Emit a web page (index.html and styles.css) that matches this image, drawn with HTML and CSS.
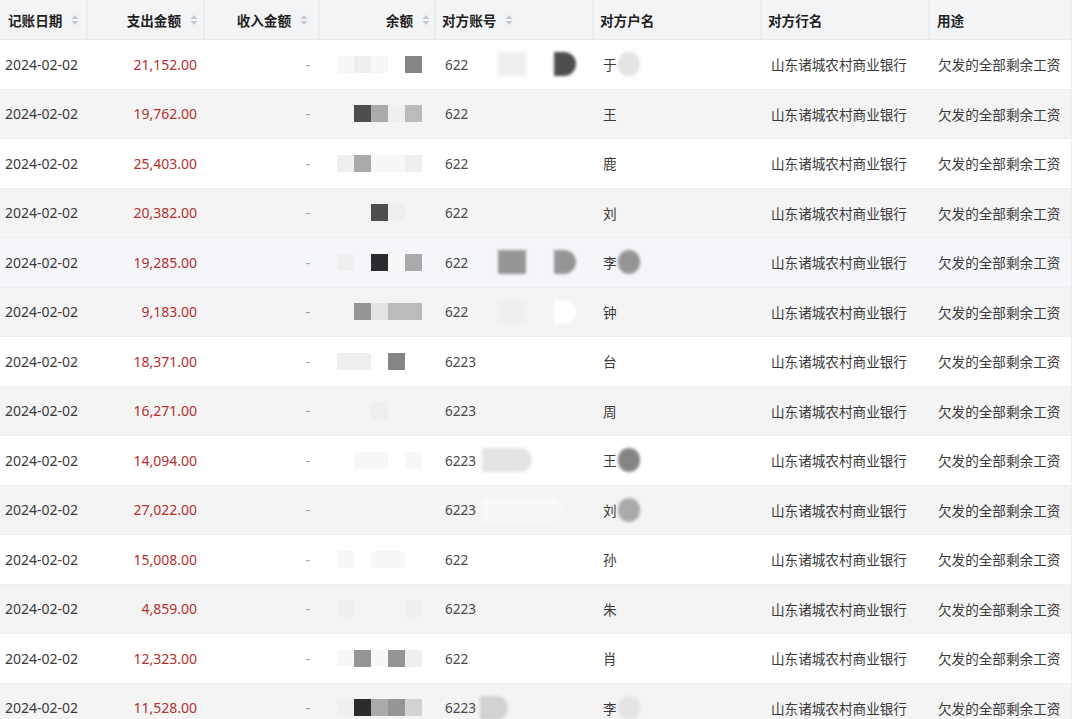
FILE: index.html
```html
<!DOCTYPE html>
<html lang="zh">
<head>
<meta charset="utf-8">
<link rel="stylesheet" href="styles.css">
</head>
<body>
<div class="table">
  <div class="row head">
    <div class="c c1"><span>记账日期</span><svg class="sort" viewBox="0 0 8 12"><path d="M4 1 L7.5 5 H0.5 Z M4 11 L7.5 7 H0.5 Z"/></svg></div>
    <div class="c c2 r"><span>支出金额</span><svg class="sort" viewBox="0 0 8 12"><path d="M4 1 L7.5 5 H0.5 Z M4 11 L7.5 7 H0.5 Z"/></svg></div>
    <div class="c c3 r"><span>收入金额</span><svg class="sort" viewBox="0 0 8 12"><path d="M4 1 L7.5 5 H0.5 Z M4 11 L7.5 7 H0.5 Z"/></svg></div>
    <div class="c c4 r"><span>余额</span><svg class="sort" viewBox="0 0 8 12"><path d="M4 1 L7.5 5 H0.5 Z M4 11 L7.5 7 H0.5 Z"/></svg></div>
    <div class="c c5"><span>对方账号</span><svg class="sort" viewBox="0 0 8 12"><path d="M4 1 L7.5 5 H0.5 Z M4 11 L7.5 7 H0.5 Z"/></svg></div>
    <div class="c c6"><span>对方户名</span></div>
    <div class="c c7"><span>对方行名</span></div>
    <div class="c c8"><span>用途</span></div>
  </div>

  <div class="row">
    <div class="c c1">2024-02-02</div>
    <div class="c c2 r red">21,152.00</div>
    <div class="c c3 r dash">-</div>
    <div class="c c4 m"><i class="k0"></i><i class="k1"></i><i class="k0"></i><i class="kt"></i><i class="k7"></i></div>
    <div class="c c5 acct">622<b class="blob w28 k1 ml30"></b><b class="blob w22 k8 rd ml28"></b></div>
    <div class="c c6 nm">于<b class="blob w22 k2 rd"></b></div>
    <div class="c c7">山东诸城农村商业银行</div>
    <div class="c c8">欠发的全部剩余工资</div>
  </div>

  <div class="row alt">
    <div class="c c1">2024-02-02</div>
    <div class="c c2 r red">19,762.00</div>
    <div class="c c3 r dash">-</div>
    <div class="c c4 m"><i class="kt"></i><i class="k8"></i><i class="k5"></i><i class="k1"></i><i class="k4"></i></div>
    <div class="c c5 acct">622</div>
    <div class="c c6 nm">王</div>
    <div class="c c7">山东诸城农村商业银行</div>
    <div class="c c8">欠发的全部剩余工资</div>
  </div>

  <div class="row">
    <div class="c c1">2024-02-02</div>
    <div class="c c2 r red">25,403.00</div>
    <div class="c c3 r dash">-</div>
    <div class="c c4 m"><i class="k1"></i><i class="k5"></i><i class="k0"></i><i class="k0"></i><i class="k1"></i></div>
    <div class="c c5 acct">622</div>
    <div class="c c6 nm">鹿</div>
    <div class="c c7">山东诸城农村商业银行</div>
    <div class="c c8">欠发的全部剩余工资</div>
  </div>

  <div class="row alt">
    <div class="c c1">2024-02-02</div>
    <div class="c c2 r red">20,382.00</div>
    <div class="c c3 r dash">-</div>
    <div class="c c4 m"><i class="kt"></i><i class="kt"></i><i class="k8"></i><i class="k1"></i><i class="kt"></i></div>
    <div class="c c5 acct">622</div>
    <div class="c c6 nm">刘</div>
    <div class="c c7">山东诸城农村商业银行</div>
    <div class="c c8">欠发的全部剩余工资</div>
  </div>

  <div class="row hover">
    <div class="c c1">2024-02-02</div>
    <div class="c c2 r red">19,285.00</div>
    <div class="c c3 r dash">-</div>
    <div class="c c4 m"><i class="k1"></i><i class="kt"></i><i class="k9"></i><i class="k0"></i><i class="k5"></i></div>
    <div class="c c5 acct">622<b class="blob w28 k6 ml30"></b><b class="blob w22 k6 rd ml28"></b></div>
    <div class="c c6 nm">李<b class="blob w22 k6 rd"></b></div>
    <div class="c c7">山东诸城农村商业银行</div>
    <div class="c c8">欠发的全部剩余工资</div>
  </div>

  <div class="row alt">
    <div class="c c1">2024-02-02</div>
    <div class="c c2 r red">9,183.00</div>
    <div class="c c3 r dash">-</div>
    <div class="c c4 m"><i class="kt"></i><i class="k6"></i><i class="k2"></i><i class="k4"></i><i class="k4"></i></div>
    <div class="c c5 acct">622<b class="blob w28 k1 ml30"></b><b class="blob w22 kw rd ml28"></b></div>
    <div class="c c6 nm">钟</div>
    <div class="c c7">山东诸城农村商业银行</div>
    <div class="c c8">欠发的全部剩余工资</div>
  </div>

  <div class="row">
    <div class="c c1">2024-02-02</div>
    <div class="c c2 r red">18,371.00</div>
    <div class="c c3 r dash">-</div>
    <div class="c c4 m"><i class="k1"></i><i class="k1"></i><i class="kt"></i><i class="k7"></i><i class="kt"></i></div>
    <div class="c c5 acct">6223</div>
    <div class="c c6 nm">台</div>
    <div class="c c7">山东诸城农村商业银行</div>
    <div class="c c8">欠发的全部剩余工资</div>
  </div>

  <div class="row alt">
    <div class="c c1">2024-02-02</div>
    <div class="c c2 r red">16,271.00</div>
    <div class="c c3 r dash">-</div>
    <div class="c c4 m"><i class="kt"></i><i class="kt"></i><i class="k1"></i><i class="kt"></i><i class="kt"></i></div>
    <div class="c c5 acct">6223</div>
    <div class="c c6 nm">周</div>
    <div class="c c7">山东诸城农村商业银行</div>
    <div class="c c8">欠发的全部剩余工资</div>
  </div>

  <div class="row">
    <div class="c c1">2024-02-02</div>
    <div class="c c2 r red">14,094.00</div>
    <div class="c c3 r dash">-</div>
    <div class="c c4 m"><i class="kt"></i><i class="k0"></i><i class="k0"></i><i class="kt"></i><i class="k0"></i></div>
    <div class="c c5 acct">6223<b class="blob w50 k2 ml6 rd"></b></div>
    <div class="c c6 nm">王<b class="blob w22 k7 rd"></b></div>
    <div class="c c7">山东诸城农村商业银行</div>
    <div class="c c8">欠发的全部剩余工资</div>
  </div>

  <div class="row alt">
    <div class="c c1">2024-02-02</div>
    <div class="c c2 r red">27,022.00</div>
    <div class="c c3 r dash">-</div>
    <div class="c c4 m"><i class="kt"></i><i class="kt"></i><i class="kt"></i><i class="kt"></i><i class="kt"></i></div>
    <div class="c c5 acct">6223<b class="blob w80 k0 ml6 rd"></b></div>
    <div class="c c6 nm">刘<b class="blob w22 k5 rd"></b></div>
    <div class="c c7">山东诸城农村商业银行</div>
    <div class="c c8">欠发的全部剩余工资</div>
  </div>

  <div class="row">
    <div class="c c1">2024-02-02</div>
    <div class="c c2 r red">15,008.00</div>
    <div class="c c3 r dash">-</div>
    <div class="c c4 m"><i class="k0"></i><i class="kt"></i><i class="k0"></i><i class="k0"></i><i class="kt"></i></div>
    <div class="c c5 acct">622</div>
    <div class="c c6 nm">孙</div>
    <div class="c c7">山东诸城农村商业银行</div>
    <div class="c c8">欠发的全部剩余工资</div>
  </div>

  <div class="row alt">
    <div class="c c1">2024-02-02</div>
    <div class="c c2 r red">4,859.00</div>
    <div class="c c3 r dash">-</div>
    <div class="c c4 m"><i class="k1"></i><i class="kt"></i><i class="kt"></i><i class="kt"></i><i class="k1"></i></div>
    <div class="c c5 acct">6223</div>
    <div class="c c6 nm">朱</div>
    <div class="c c7">山东诸城农村商业银行</div>
    <div class="c c8">欠发的全部剩余工资</div>
  </div>

  <div class="row">
    <div class="c c1">2024-02-02</div>
    <div class="c c2 r red">12,323.00</div>
    <div class="c c3 r dash">-</div>
    <div class="c c4 m"><i class="k0"></i><i class="k6"></i><i class="k0"></i><i class="k6"></i><i class="k1"></i></div>
    <div class="c c5 acct">622</div>
    <div class="c c6 nm">肖</div>
    <div class="c c7">山东诸城农村商业银行</div>
    <div class="c c8">欠发的全部剩余工资</div>
  </div>

  <div class="row alt">
    <div class="c c1">2024-02-02</div>
    <div class="c c2 r red">11,528.00</div>
    <div class="c c3 r dash">-</div>
    <div class="c c4 m"><i class="k1"></i><i class="k9"></i><i class="k5"></i><i class="k6"></i><i class="k3"></i></div>
    <div class="c c5 acct">6223<b class="blob w28 k3 ml4 rd"></b></div>
    <div class="c c6 nm">李<b class="blob w22 k2 rd"></b></div>
    <div class="c c7">山东诸城农村商业银行</div>
    <div class="c c8">欠发的全部剩余工资</div>
  </div>
</div>
</body>
</html>
```

FILE: styles.css
```css
* { box-sizing: border-box; }
html, body { margin: 0; padding: 0; background: #ffffff; }
body {
  font-family: "Noto Sans", "Noto Sans CJK SC", sans-serif;
  font-size: 14px;
  color: #3a3a3a;
  overflow: hidden;
  height: 719px;
}
.table {
  width: 1072px;
  border-right: 1px solid #eeeeee;
}
.row {
  display: grid;
  grid-template-columns: 88px 117px 115px 116px 158px 168px 168px 141px;
  height: 49.5px;
  background: #ffffff;
  border-bottom: 1px solid #efefef;
}
.row.alt { background: #f4f4f4; }
.row.hover { background: #f5f6fa; }
.row.head {
  height: 40px;
  background: #f3f4f6;
  font-weight: 700;
  color: #1f1f1f;
  border-bottom: 1px solid #e9eaec;
}
.head .c { border-right: 2px solid #eaebed; }
.head .c8 { border-right: none; }
.c {
  display: flex;
  align-items: center;
  white-space: nowrap;
  overflow: hidden;
  font-size: 13.6px;
}
.c1 { padding-left: 5px; }
.head .c1 { padding-left: 8px; }
.r { justify-content: flex-end; padding-right: 8px; }
.head .c2 { padding-right: 5px; }
.head .c3 { padding-right: 10px; }
.head .c4 { padding-right: 4px; }
.c5 { padding-left: 9px; }
.head .c5 { padding-left: 6px; }
.c6 { padding-left: 9px; }
.head .c6 { padding-left: 6px; }
.c7 { padding-left: 9px; }
.head .c7 { padding-left: 6px; }
.c8 { padding-left: 8px; }
.head .c8 { padding-left: 7px; }
.sort { width: 8px; height: 12px; margin-left: 9px; fill: #c3c7cf; flex: none; }
.red { color: #b3302f; font-size: 14px; }
.c1 { font-size: 14px; }
.head .c1 { font-size: 13.6px; }
.dash { color: #7fa8a4; padding-right: 10px; }
.m { padding-left: 17px; }
.m i { display: block; width: 17px; height: 17px; }
.acct { color: #4a4a4a; }
.blob { display: block; height: 24px; filter: blur(1.5px); flex: none; }
.rd { border-radius: 0 12px 12px 0; }
.w22 { width: 22px; }
.w28 { width: 28px; }
.w50 { width: 50px; }
.w80 { width: 80px; }
.ml30 { margin-left: 30px; }
.ml28 { margin-left: 28px; }
.ml6 { margin-left: 6px; }
.ml4 { margin-left: 4px; }
.nm .blob { margin-left: 1px; border-radius: 12px; }
.kt { background: transparent; }
.kw { background: #ffffff; }
.k0 { background: #f8f8f8; }
.k1 { background: #efefef; }
.k2 { background: #e4e4e4; }
.k3 { background: #d2d2d2; }
.k4 { background: #bbbbbb; }
.k5 { background: #aaaaaa; }
.k6 { background: #959595; }
.k7 { background: #858585; }
.k8 { background: #4e4e4e; }
.k9 { background: #2c2c2e; }
```
